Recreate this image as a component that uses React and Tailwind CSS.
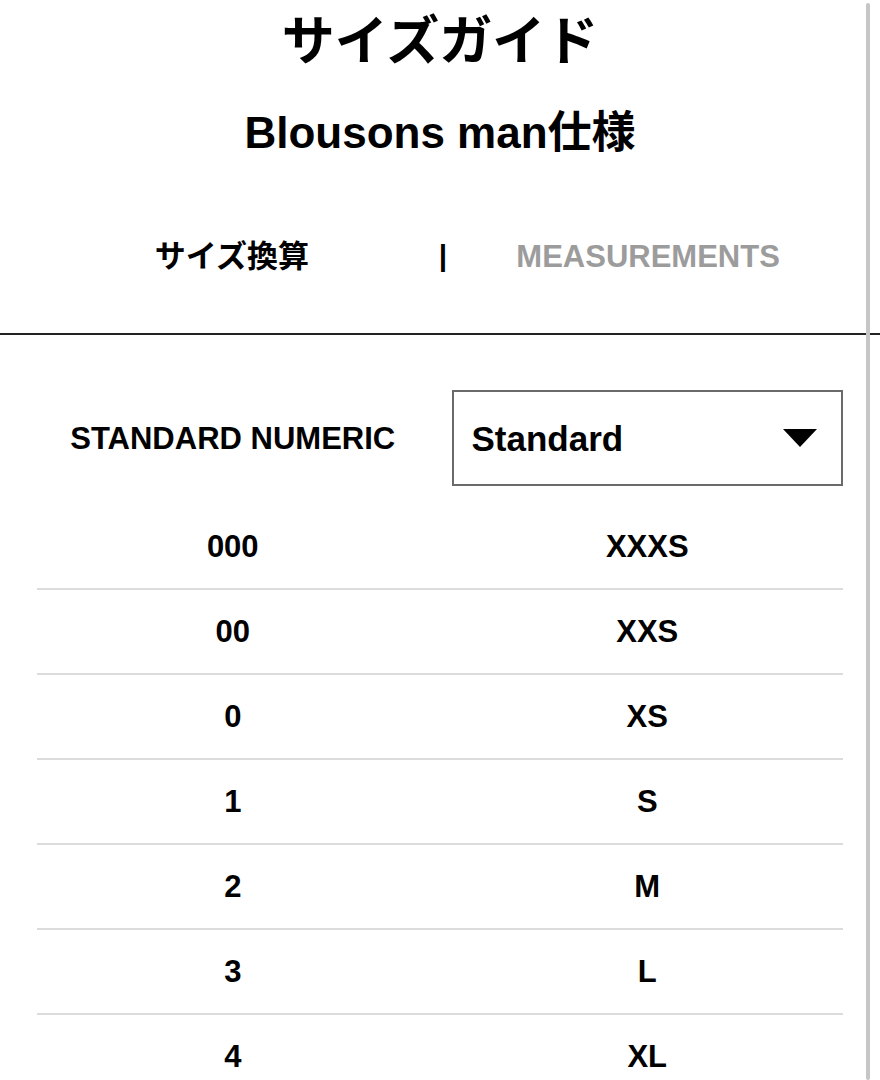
import React from 'react';

const rows = [
  ['000', 'XXXS'],
  ['00', 'XXS'],
  ['0', 'XS'],
  ['1', 'S'],
  ['2', 'M'],
  ['3', 'L'],
  ['4', 'XL'],
];

const font = { fontFamily: '"Liberation Sans", "Noto Sans CJK JP", sans-serif' };

const App = () => {
  return (
    <div className="relative h-[1080px] w-[880px] overflow-hidden bg-white text-black" style={font}>
      <div className="flex h-[82px] items-center justify-center">
        <h1 className="text-[53px] font-bold leading-none">サイズガイド</h1>
      </div>
      <div className="flex h-[102px] items-center justify-center">
        <h2 className="text-[44px] font-bold leading-none">Blousons man仕様</h2>
      </div>
      <div className="mx-[37px] grid h-[149px] grid-cols-[1fr_auto_1fr] items-center pb-[5px]">
        <div className="text-center text-[31px] font-bold leading-none">サイズ換算</div>
        <div className="pl-[12px] pr-[6px] text-[30px] font-bold leading-none">|</div>
        <div className="text-center text-[31px] font-bold leading-none text-[#9c9c9c]">MEASUREMENTS</div>
      </div>
      <div className="h-[2px] w-full bg-[#222]" />

      <div className="mx-[37px] grid grid-cols-2 items-center gap-x-[23px] pt-[55px] pb-[19px]">
        <div className="text-center text-[31px] font-bold leading-none">STANDARD NUMERIC</div>
        <div className="flex h-[96px] items-center justify-between border-2 border-[#6a6a6a] pl-[18px] pr-[24px]">
          <span className="text-[35px] font-bold leading-none">Standard</span>
          <svg width="34" height="18" viewBox="0 0 34 18">
            <path d="M0 0 H34 L17 18 Z" fill="#000" />
          </svg>
        </div>
      </div>

      <div className="mx-[37px]">
        {rows.map((r, i) => (
          <div
            key={i}
            className="grid h-[85px] grid-cols-2 items-center gap-x-[23px] border-b-2 border-[#dcdcdc] pb-[1px]"
          >
            <div className="text-center text-[31px] font-bold leading-none">{r[0]}</div>
            <div className="text-center text-[31px] font-bold leading-none">{r[1]}</div>
          </div>
        ))}
      </div>

      <div className="absolute top-[3px] bottom-0 right-[10px] w-[4px] rounded-full bg-[#c6c6c6]" />
    </div>
  );
};

export default App;
